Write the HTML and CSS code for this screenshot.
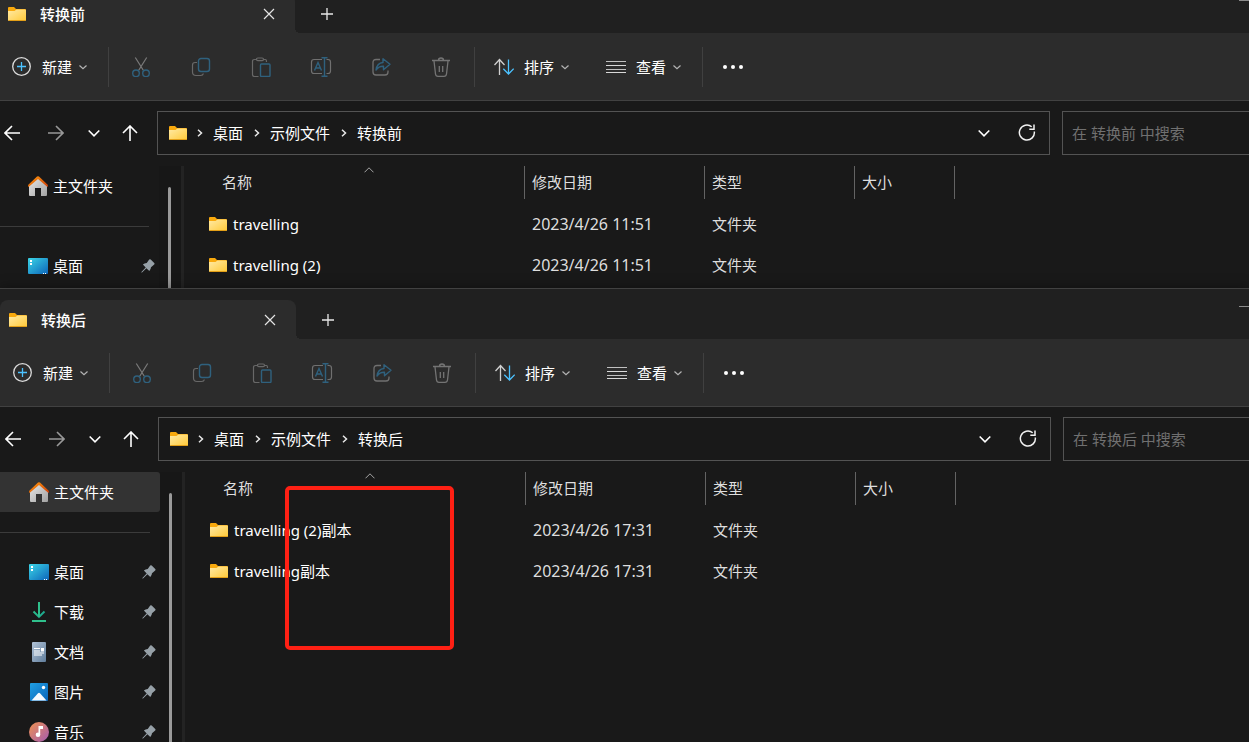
FILE: index.html
```html
<!DOCTYPE html>
<html lang="zh-CN">
<head>
<meta charset="utf-8">
<title>文件资源管理器</title>
<link rel="stylesheet" href="styles.css">
</head>
<body>
<svg class="sprite" aria-hidden="true">
  <defs>
    <linearGradient id="g-folder" x1="0" y1="0" x2="1" y2="1"><stop offset="0" stop-color="#ffeaa5"/><stop offset="1" stop-color="#ffc937"/></linearGradient>
    <linearGradient id="g-roof" x1="0" y1="0" x2="1" y2="1"><stop offset="0" stop-color="#ff9a0c"/><stop offset="1" stop-color="#cf3f0b"/></linearGradient>
    <linearGradient id="g-wall" x1="0" y1="0" x2="1" y2="1"><stop offset="0" stop-color="#e8e8e8"/><stop offset="1" stop-color="#a2a2a2"/></linearGradient>
    <linearGradient id="g-desk" x1="0" y1="0" x2="1" y2="1"><stop offset="0" stop-color="#3bd5e6"/><stop offset="1" stop-color="#0d65ba"/></linearGradient>
    <linearGradient id="g-down" x1="0" y1="0" x2="1" y2="1"><stop offset="0" stop-color="#38d08a"/><stop offset="1" stop-color="#119b91"/></linearGradient>
    <linearGradient id="g-doc" x1="0" y1="0" x2="1" y2="1"><stop offset="0" stop-color="#b2c4d8"/><stop offset="1" stop-color="#607d9b"/></linearGradient>
    <linearGradient id="g-pic" x1="0" y1="0" x2="1" y2="1"><stop offset="0" stop-color="#20a0e4"/><stop offset="1" stop-color="#0964b8"/></linearGradient>
    <linearGradient id="g-music" x1="0" y1="0" x2="1" y2="1"><stop offset="0" stop-color="#f09250"/><stop offset="1" stop-color="#a25bb2"/></linearGradient>
  </defs>
  <symbol id="folder" viewBox="0 0 18 14"><path d="M0 1Q0 0 1 0H6L8 2H17Q18 2 18 3V7H0Z" fill="#f8a90d"/><path d="M0 4H6.500L8.500 2.500H17Q18 2.500 18 3.500V13Q18 14 17 14H1Q0 14 0 13Z" fill="url(#g-folder)"/><path d="M0.500 13.500H17.500" stroke="#e39f17"/></symbol>
  <symbol id="close" viewBox="0 0 12 12"><path d="M1 1L11 11M11 1L1 11" fill="none" stroke="#e4e4e4" stroke-width="1.200"/></symbol>
  <symbol id="plus" viewBox="0 0 12 12"><path d="M6 0V12M0 6H12" stroke="#e8e8e8" stroke-width="1.300"/></symbol>
  <symbol id="min" viewBox="0 0 10 1"><path d="M0 .5H10" stroke="#8c8c8c"/></symbol>
  <symbol id="new" viewBox="0 0 20 20"><circle cx="9.500" cy="9.500" r="8.800" fill="none" stroke="#dcdcdc" stroke-width="1.300"/><path d="M9.500 5V14M5 9.500H14" stroke="#4cc2ff" stroke-width="1.300"/></symbol>
  <symbol id="chev" viewBox="0 0 10 10"><path d="M1.500 3.500L5 6.800L8.500 3.500" fill="none" stroke="#b4b4b4" stroke-width="1.200"/></symbol>
  <symbol id="cut" viewBox="0 0 20 20"><path d="M4.300 .5L12.300 13.300M15.700 .5L7.700 13.300" stroke="#7a7a7a" stroke-width="1.200"/><g fill="none" stroke="#2f617e" stroke-width="1.400"><circle cx="5" cy="16.300" r="3.300"/><circle cx="15" cy="16.300" r="3.300"/></g></symbol>
  <symbol id="copy" viewBox="0 0 20 20"><path d="M6 5.500H4Q1.500 5.500 1.500 8V15Q1.500 18.500 5 18.500H9.500Q12 18.500 12.300 16.500" fill="none" stroke="#686868" stroke-width="1.200"/><rect x="7.500" y="1.500" width="11" height="13" rx="2.500" fill="none" stroke="#2f617e" stroke-width="1.400"/></symbol>
  <symbol id="paste" viewBox="0 0 20 20"><path d="M6 2.500H3.500Q1.500 2.500 1.500 4.500V17.500Q1.500 19.500 3.500 19.500H7.500M12.500 2.500H14.500Q15.500 2.500 15.500 5" fill="none" stroke="#686868" stroke-width="1.200"/><rect x="5.500" y="1" width="7" height="2.600" rx="1.300" fill="none" stroke="#686868" stroke-width="1.200"/><rect x="9.500" y="7" width="9.500" height="12.500" rx="1" fill="none" stroke="#2f617e" stroke-width="1.400"/></symbol>
  <symbol id="rename" viewBox="0 0 22 20"><path d="M12 2.500H4Q1.500 2.500 1.500 5V14Q1.500 16.500 4 16.500H12M16.500 2.500H18Q20.500 2.500 20.500 5V14Q20.500 16.500 18 16.500H16.500" fill="none" stroke="#707070" stroke-width="1.200"/><path d="M4.500 13.500L8 5.500L11.500 13.500M5.700 11H10.300M14.500 .5V19.500M11.500 .7H17.500M11.500 19.300H17.500" fill="none" stroke="#2f617e" stroke-width="1.400"/></symbol>
  <symbol id="share" viewBox="0 0 20 20"><path d="M9 2.500H5Q2 2.500 2 5.500V15Q2 18 5 18H14Q17 18 17 15V13.500" fill="none" stroke="#707070" stroke-width="1.300"/><path d="M5 13Q6 6 12 5.500V1.800L19 7.300L12.500 12.700V9.300Q8 9 5 13Z" fill="none" stroke="#2f617e" stroke-width="1.400" stroke-linejoin="round"/></symbol>
  <symbol id="trash" viewBox="0 0 20 20"><path d="M1 3.500H19M7.500 3.200Q7.500 1 10 1T12.500 3.200M3 4L4.500 17Q4.800 19.300 7 19.300H13Q15.200 19.300 15.500 17L17 4M8.300 9V15M11.700 9V15" fill="none" stroke="#747474" stroke-width="1.300"/></symbol>
  <symbol id="sort" viewBox="0 0 20 18"><path d="M5.500 17V1.500M.5 7L5.500 1.500L10.500 7" fill="none" stroke="#d0d0d0" stroke-width="1.300"/><path d="M14.500 1.500V16M9.300 10.700L14.500 16L19.700 10.700" fill="none" stroke="#4cc2ff" stroke-width="1.300"/></symbol>
  <symbol id="view" viewBox="0 0 20 14"><path d="M0 1.500H20M0 9.500H20" stroke="#c0c0c0"/><path d="M0 5.500H20M0 12.500H20" stroke="#d8d8d8"/></symbol>
  <symbol id="dots" viewBox="0 0 20 4"><g fill="#fff"><circle cx="2" cy="2" r="2"/><circle cx="10" cy="2" r="2"/><circle cx="18" cy="2" r="2"/></g></symbol>
  <symbol id="back" viewBox="0 0 16 16"><path d="M16 8H1M8 1L1 8L8 15" fill="none" stroke="currentColor" stroke-width="1.600"/></symbol>
  <symbol id="fwd" viewBox="0 0 16 16"><path d="M0 8H15M8 1L15 8L8 15" fill="none" stroke="currentColor" stroke-width="1.600"/></symbol>
  <symbol id="up" viewBox="0 0 16 16"><path d="M8 16V1M1 8L8 1L15 8" fill="none" stroke="currentColor" stroke-width="1.600"/></symbol>
  <symbol id="down" viewBox="0 0 12 12"><path d="M.7 3.500L6 8.800L11.300 3.500" fill="none" stroke="currentColor" stroke-width="1.600"/></symbol>
  <symbol id="next" viewBox="0 0 8 8"><path d="M2 .7L5.500 4L2 7.300" fill="none" stroke="#e8e8e8" stroke-width="1.500"/></symbol>
  <symbol id="refresh" viewBox="0 0 18 18"><path d="M13.700 2.800A7.500 7.500 0 1 0 16.300 7.500M16 .5V5.200H11.300" fill="none" stroke="#f2f2f2" stroke-width="1.500"/></symbol>
  <symbol id="home" viewBox="0 0 20 20"><path d="M1 9.500L10 1.500L19 9.500V19Q19 20 18 20H13V12H7V20H2Q1 20 1 19Z" fill="url(#g-wall)"/><path d="M.3 8.700L9 .6Q10 -.2 11 .6L19.700 8.700Q20.200 9.800 19.500 11L10 3L.5 11Q-.2 9.800 .3 8.700Z" fill="url(#g-roof)"/></symbol>
  <symbol id="desktop" viewBox="0 0 20 16"><rect width="20" height="16" rx="1" fill="url(#g-desk)"/><path d="M2 2H4V4H2ZM2 5H4V7H2ZM15 15H16V16H15ZM17 15H18V16H17Z" fill="#fff"/></symbol>
  <symbol id="download" viewBox="0 0 20 20"><path d="M10 0V15M4.500 9.500L10 15L15.500 9.500M3 19H17" fill="none" stroke="url(#g-down)" stroke-width="1.900"/><rect x="9" width="1.900" height="15" fill="#2fc08c"/><rect x="3" y="18" width="14" height="2" fill="#2fc08c"/></symbol>
  <symbol id="document" viewBox="0 0 20 20"><rect x="3" width="14" height="20" rx="1" fill="url(#g-doc)"/><path d="M5 6.500H11M5 9H11M5 11H15M5 13H13" stroke="#fff" stroke-width="1.200"/><rect x="12" y="6" width="3" height="3.500" fill="#fff"/></symbol>
  <symbol id="picture" viewBox="0 0 20 20"><rect x="1" y="1" width="18" height="18" rx="1" fill="url(#g-pic)"/><path d="M2.500 18.500L9 11.200Q10 10.300 11 11.200L17.500 18.500Z" fill="#f6fbff"/><circle cx="14.500" cy="5.500" r="1.700" fill="#fff"/></symbol>
  <symbol id="music" viewBox="0 0 20 20"><circle cx="10" cy="10" r="10" fill="url(#g-music)"/><path d="M9.500 4H14V7H11.200V12.500H9.500Z" fill="#fff"/><circle cx="9" cy="12.700" r="2.300" fill="#fff"/></symbol>
  <symbol id="pin" viewBox="0 0 14 14"><path d="M8.200 .6Q9 -.1 9.700 .6L13.200 4Q14 4.800 13.200 5.500L10 8.200Q9.800 10.500 8.300 12L5.400 9.200L1 13.500H.4V12.900L4.700 8.500L1.900 5.600Q3.400 4.200 5.700 4Z" fill="#97a1a8"/></symbol>
  <symbol id="caret" viewBox="0 0 10 6"><path d="M.5 5.300L5 .8L9.500 5.300" fill="none" stroke="#a4a4a4"/></symbol>
</svg>

<section class="window window-before" aria-label="转换前">
  <header class="titlebar">
    <div class="tab"><svg class="i-folder"><use href="#folder"/></svg><span class="tab-name">转换前</span><button class="square" aria-label="关闭"><svg class="i12"><use href="#close"/></svg></button></div>
    <button class="square new-tab" aria-label="新标签页"><svg class="i12"><use href="#plus"/></svg></button>
    <button class="minimise" aria-label="最小化"><svg><use href="#min"/></svg></button>
  </header>
  <div class="toolbar" role="toolbar">
    <button class="command command-new"><svg class="i20"><use href="#new"/></svg><span>新建</span><svg class="i10"><use href="#chev"/></svg></button>
    <div class="actions">
      <button aria-label="剪切"><svg class="i20"><use href="#cut"/></svg></button>
      <button aria-label="复制"><svg class="i20"><use href="#copy"/></svg></button>
      <button aria-label="粘贴"><svg class="i20"><use href="#paste"/></svg></button>
      <button aria-label="重命名"><svg class="i22"><use href="#rename"/></svg></button>
      <button aria-label="共享"><svg class="i20"><use href="#share"/></svg></button>
      <button aria-label="删除"><svg class="i20"><use href="#trash"/></svg></button>
    </div>
    <div class="views">
      <button class="command"><svg class="i-sort"><use href="#sort"/></svg><span>排序</span><svg class="i10"><use href="#chev"/></svg></button>
      <button class="command"><svg class="i-view"><use href="#view"/></svg><span>查看</span><svg class="i10"><use href="#chev"/></svg></button>
    </div>
    <button class="more" aria-label="更多"><svg class="i-dots"><use href="#dots"/></svg></button>
  </div>
  <div class="location">
    <nav class="history">
      <button class="square" aria-label="后退"><svg class="i16"><use href="#back"/></svg></button>
      <button class="square forward" aria-label="前进"><svg class="i16"><use href="#fwd"/></svg></button>
      <button class="square recent" aria-label="最近位置"><svg class="i12"><use href="#down"/></svg></button>
      <button class="square" aria-label="向上"><svg class="i16"><use href="#up"/></svg></button>
    </nav>
    <div class="address">
      <svg class="i-folder"><use href="#folder"/></svg>
      <svg class="crumb-arrow"><use href="#next"/></svg><a href="#">桌面</a>
      <svg class="crumb-arrow"><use href="#next"/></svg><a href="#">示例文件</a>
      <svg class="crumb-arrow"><use href="#next"/></svg><a href="#">转换前</a>
      <div class="address-tools"><button class="square" aria-label="历史记录"><svg class="i12"><use href="#down"/></svg></button><button class="square" aria-label="刷新"><svg class="i18"><use href="#refresh"/></svg></button></div>
    </div>
    <input class="search" type="text" aria-label="搜索" placeholder="在 转换前 中搜索">
  </div>
  <div class="body">
    <nav class="sidebar">
      <a class="place" href="#"><svg class="i20"><use href="#home"/></svg><span>主文件夹</span></a>
      <hr>
      <a class="place" href="#"><svg class="i-desk"><use href="#desktop"/></svg><span>桌面</span><svg class="pin"><use href="#pin"/></svg></a>
    </nav>
    <div class="scroll"><div class="thumb"></div></div>
    <main class="files">
      <table>
        <colgroup><col class="c-name"><col class="c-date"><col class="c-type"><col class="c-size"></colgroup>
        <thead><tr><th><div class="head head-name">名称<svg class="caret"><use href="#caret"/></svg></div></th><th><div class="head">修改日期</div></th><th><div class="head">类型</div></th><th><div class="head">大小</div></th></tr></thead>
        <tbody>
          <tr><td><div class="file"><svg class="i-folder"><use href="#folder"/></svg><span>travelling</span></div></td><td class="date">2023/4/26 11:51</td><td>文件夹</td><td></td></tr>
          <tr><td><div class="file"><svg class="i-folder"><use href="#folder"/></svg><span>travelling (2)</span></div></td><td class="date">2023/4/26 11:51</td><td>文件夹</td><td></td></tr>
        </tbody>
      </table>
    </main>
  </div>
</section>

<section class="window window-after" aria-label="转换后">
  <header class="titlebar">
    <div class="tab"><svg class="i-folder"><use href="#folder"/></svg><span class="tab-name">转换后</span><button class="square" aria-label="关闭"><svg class="i12"><use href="#close"/></svg></button></div>
    <button class="square new-tab" aria-label="新标签页"><svg class="i12"><use href="#plus"/></svg></button>
    <button class="minimise" aria-label="最小化"><svg><use href="#min"/></svg></button>
  </header>
  <div class="toolbar" role="toolbar">
    <button class="command command-new"><svg class="i20"><use href="#new"/></svg><span>新建</span><svg class="i10"><use href="#chev"/></svg></button>
    <div class="actions">
      <button aria-label="剪切"><svg class="i20"><use href="#cut"/></svg></button>
      <button aria-label="复制"><svg class="i20"><use href="#copy"/></svg></button>
      <button aria-label="粘贴"><svg class="i20"><use href="#paste"/></svg></button>
      <button aria-label="重命名"><svg class="i22"><use href="#rename"/></svg></button>
      <button aria-label="共享"><svg class="i20"><use href="#share"/></svg></button>
      <button aria-label="删除"><svg class="i20"><use href="#trash"/></svg></button>
    </div>
    <div class="views">
      <button class="command"><svg class="i-sort"><use href="#sort"/></svg><span>排序</span><svg class="i10"><use href="#chev"/></svg></button>
      <button class="command"><svg class="i-view"><use href="#view"/></svg><span>查看</span><svg class="i10"><use href="#chev"/></svg></button>
    </div>
    <button class="more" aria-label="更多"><svg class="i-dots"><use href="#dots"/></svg></button>
  </div>
  <div class="location">
    <nav class="history">
      <button class="square" aria-label="后退"><svg class="i16"><use href="#back"/></svg></button>
      <button class="square forward" aria-label="前进"><svg class="i16"><use href="#fwd"/></svg></button>
      <button class="square recent" aria-label="最近位置"><svg class="i12"><use href="#down"/></svg></button>
      <button class="square" aria-label="向上"><svg class="i16"><use href="#up"/></svg></button>
    </nav>
    <div class="address">
      <svg class="i-folder"><use href="#folder"/></svg>
      <svg class="crumb-arrow"><use href="#next"/></svg><a href="#">桌面</a>
      <svg class="crumb-arrow"><use href="#next"/></svg><a href="#">示例文件</a>
      <svg class="crumb-arrow"><use href="#next"/></svg><a href="#">转换后</a>
      <div class="address-tools"><button class="square" aria-label="历史记录"><svg class="i12"><use href="#down"/></svg></button><button class="square" aria-label="刷新"><svg class="i18"><use href="#refresh"/></svg></button></div>
    </div>
    <input class="search" type="text" aria-label="搜索" placeholder="在 转换后 中搜索">
  </div>
  <div class="body">
    <nav class="sidebar">
      <a class="place selected" href="#"><svg class="i20"><use href="#home"/></svg><span>主文件夹</span></a>
      <hr>
      <a class="place" href="#"><svg class="i-desk"><use href="#desktop"/></svg><span>桌面</span><svg class="pin"><use href="#pin"/></svg></a>
      <a class="place" href="#"><svg class="i20"><use href="#download"/></svg><span>下载</span><svg class="pin"><use href="#pin"/></svg></a>
      <a class="place" href="#"><svg class="i20"><use href="#document"/></svg><span>文档</span><svg class="pin"><use href="#pin"/></svg></a>
      <a class="place" href="#"><svg class="i20"><use href="#picture"/></svg><span>图片</span><svg class="pin"><use href="#pin"/></svg></a>
      <a class="place" href="#"><svg class="i20"><use href="#music"/></svg><span>音乐</span><svg class="pin"><use href="#pin"/></svg></a>
    </nav>
    <div class="scroll"><div class="thumb"></div></div>
    <main class="files">
      <table>
        <colgroup><col class="c-name"><col class="c-date"><col class="c-type"><col class="c-size"></colgroup>
        <thead><tr><th><div class="head head-name">名称<svg class="caret"><use href="#caret"/></svg></div></th><th><div class="head">修改日期</div></th><th><div class="head">类型</div></th><th><div class="head">大小</div></th></tr></thead>
        <tbody>
          <tr><td><div class="file"><svg class="i-folder"><use href="#folder"/></svg><span>travelling (2)副本</span></div></td><td class="date">2023/4/26 17:31</td><td>文件夹</td><td></td></tr>
          <tr><td><div class="file"><svg class="i-folder"><use href="#folder"/></svg><span>travelling副本</span></div></td><td class="date">2023/4/26 17:31</td><td>文件夹</td><td></td></tr>
        </tbody>
      </table>
      <div class="highlight"></div>
    </main>
  </div>
</section>
</body>
</html>
```
FILE: styles.css
```css
* { box-sizing: border-box; }

body {
  margin: 0;
  height: 100vh;
  display: flex;
  flex-direction: column;
  overflow: hidden;
  background: #191919;
  color: #fff;
  font: 15px/20px "Noto Sans", "Noto Sans CJK SC", sans-serif;
}

button, input { font: inherit; color: inherit; }
button { padding: 0; border: 0; background: none; display: flex; align-items: center; justify-content: center; }
a { color: inherit; text-decoration: none; }
svg { display: block; flex: none; }

.sprite { position: absolute; width: 0; height: 0; }
.i10 { width: 10px; height: 10px; }
.i12 { width: 12px; height: 12px; }
.i16 { width: 16px; height: 16px; }
.i18 { width: 18px; height: 18px; }
.i20 { width: 20px; height: 20px; }
.i22 { width: 22px; height: 20px; }
.i-folder { width: 18px; height: 14px; }
.i-sort { width: 20px; height: 18px; }
.i-view { width: 20px; height: 14px; }
.i-dots { width: 20px; height: 4px; }
.i-desk { width: 20px; height: 16px; }
.square { width: 24px; height: 24px; flex: none; }

.window { --inset: 0px; display: flex; flex-direction: column; flex: none; background: #191919; }
.window-before { margin-top: -17px; }
.window-after {
  --inset: 1px;
  flex: 1;
  min-height: 0;
  position: relative;
  border-top: 1px solid #414141;
  box-shadow: 0 0 12px rgba(0, 0, 0, 0.4);
}

.titlebar { display: flex; flex: none; align-items: flex-end; height: 50px; background: #202020; }
.tab {
  position: relative;
  display: flex;
  align-items: center;
  width: calc(295px + var(--inset));
  height: 39px;
  padding: 0 14px 0 calc(8px + var(--inset));
  border-radius: 8px 8px 0 0;
  background: #2c2c2c;
}
.tab::after {
  content: "";
  position: absolute;
  left: 100%;
  bottom: 0;
  width: 5px;
  height: 5px;
  background: radial-gradient(circle at 100% 0, transparent 5px, #2c2c2c 5px);
}
.tab-name { flex: 1; padding-left: 14px; font-weight: 500; }
.new-tab { margin: 0 0 7px 20px; }
.minimise { align-self: flex-start; margin: 17px 0 0 auto; }
.minimise svg { width: 10px; height: 1px; }

.toolbar {
  display: flex;
  flex: none;
  align-items: center;
  height: 68px;
  padding-left: calc(12px + var(--inset));
  border-bottom: 1px solid #414141;
  background: #2c2c2c;
}
.command { height: 40px; }
.command span { margin: 0 6px 0 10px; }
.command-new { margin-right: 20px; }
.actions, .views { display: flex; height: 40px; border-left: 1px solid #404040; }
.actions { padding: 0 3px 0 2px; }
.actions button { width: 60px; }
.views { gap: 36px; padding: 0 20px 0 19px; border-right: 1px solid #404040; }
.more { height: 40px; margin-left: 20px; }

.location { display: flex; flex: none; align-items: center; padding: 10px 0 11px var(--inset); }
.history { display: flex; align-items: center; width: 157px; }
.forward { margin: 0 14px 0 20px; color: #989898; }
.recent { margin-right: 12px; }
.address {
  flex: 1;
  display: flex;
  align-items: center;
  height: 44px;
  padding: 0 10px 0 11px;
  border: 1px solid #535353;
}
.address a { margin-right: 1px; }
.crumb-arrow { width: 8px; height: 8px; margin: 0 9px; }
.address-tools { display: flex; gap: 19px; margin-left: auto; }
.search {
  width: calc(187px - var(--inset));
  height: 44px;
  margin-left: 12px;
  padding: 0 9px;
  border: 1px solid #535353;
  border-right: 0;
  border-radius: 0;
  background: transparent;
  outline: 0;
}
.search::placeholder { color: #707070; opacity: 1; }

.body { display: flex; min-height: 0; overflow: hidden; }
.window-before .body { height: 122px; }
.window-after .body { flex: 1; }
.sidebar { width: calc(159px + var(--inset)); flex: none; }
.place { display: flex; align-items: center; gap: 5px; height: 40px; padding: 0 4px 0 calc(28px + var(--inset)); }
.selected { background: #333; border-radius: 0 3px 3px 0; }
.pin { width: 14px; height: 14px; margin-left: auto; }
.sidebar hr { height: 1px; margin: 20px 10px 19px 0; border: 0; background: #3b3b3b; }
.scroll { width: 25px; flex: none; padding: 21px 0 0 9px; background: #171717; border-right: 3px solid #232323; }
.thumb { width: 3px; height: 100%; border-radius: 2px 2px 0 0; background: #9a9a9a; }

.files { position: relative; flex: 1; }
table { width: 771px; table-layout: fixed; border-collapse: collapse; }
.c-name { width: 341px; }
.c-date { width: 180px; }
.c-type { width: 150px; }
.c-size { width: 100px; }
th { height: 37px; padding: 0; vertical-align: top; text-align: left; font-weight: 400; color: #dedede; }
.head { height: 33px; padding-left: 7px; border-right: 1px solid #636363; line-height: 33px; }
.head-name { position: relative; padding-left: 38px; }
.caret { position: absolute; top: 1px; left: 180px; width: 10px; height: 6px; }
td { height: 41px; padding: 0 0 0 7px; color: #dedede; }
td:first-child { padding-left: 25px; color: #fff; }
.date { font-size: 16px; }
.file { display: flex; align-items: center; gap: 6px; }

.highlight {
  position: absolute;
  top: 14px;
  left: 100px;
  width: 169px;
  height: 164px;
  border: 4px solid #ff2014;
  border-radius: 5px;
}
```
